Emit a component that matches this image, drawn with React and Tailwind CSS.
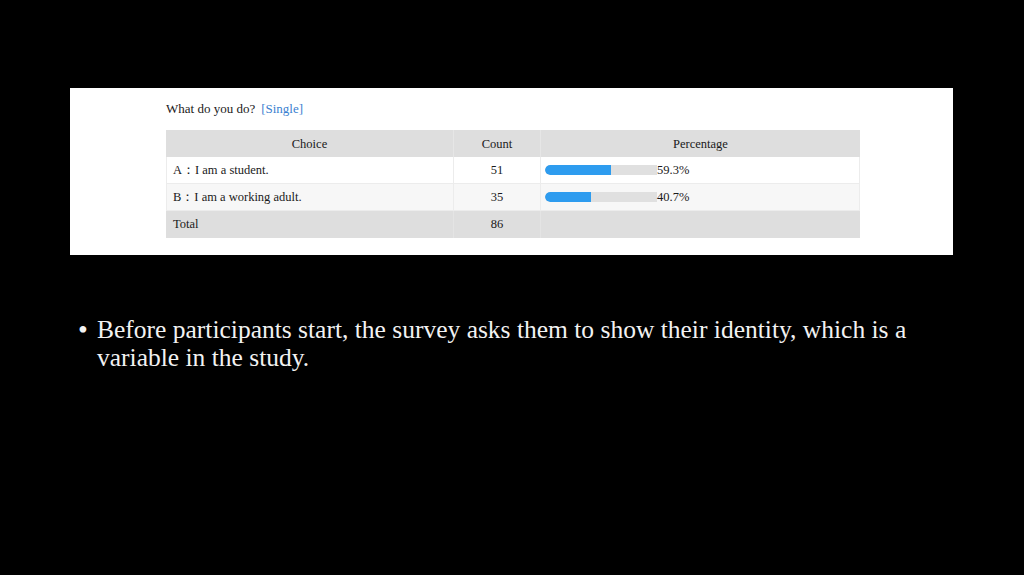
const rows = [
    { label: "A：I am a student.", count: 51, pct: 59.3 },
    { label: "B：I am a working adult.", count: 35, pct: 40.7 },
];

export default function App() {
    return (
        <div className="w-[1024px] h-[575px] bg-black overflow-hidden font-['Liberation_Serif',serif]">
            <div className="h-[88px]" />
            <div className="ml-[70px] w-[883px] h-[167px] bg-white pt-[12px] pl-[96px]">
                <div className="flex items-center h-[18px] text-[13px] text-[#1a1a1a]">
                    <span>What do you do?</span>
                    <span className="ml-[6px] text-[#3a7fd0]">[Single]</span>
                </div>
                <div className="mt-[12px] w-[694px] text-[12.5px] text-[#1a1a1a]">
                    <div className="flex h-[27px] bg-[#dedede]">
                        <div className="w-[287px] flex items-center justify-center pt-[1px]">Choice</div>
                        <div className="w-[87px] flex items-center justify-center pt-[1px] border-l border-[#e6e6e6]">Count</div>
                        <div className="flex-1 flex items-center justify-center pt-[1px] border-l border-[#e6e6e6]">Percentage</div>
                    </div>
                    {rows.map((r, i) => (
                        <div key={r.label}
                            className={`flex h-[27px] border-b border-x border-[#ececec] ${i === 0 ? "bg-white" : "bg-[#f7f7f7]"}`}>
                            <div className="w-[286px] flex items-center pl-[6px]">{r.label}</div>
                            <div className="w-[87px] flex items-center justify-center border-l border-[#ececec]">{r.count}</div>
                            <div className="flex-1 flex items-center pl-[4px] border-l border-[#ececec]">
                                <div className="w-[112px] h-[10px] bg-[#e0e0e0] rounded-l-full overflow-hidden">
                                    <div className="h-full bg-[#2e9cef] rounded-l-full" style={{ width: `${r.pct}%` }} />
                                </div>
                                <span>{r.pct}%</span>
                            </div>
                        </div>
                    ))}
                    <div className="flex h-[27px] bg-[#dedede]">
                        <div className="w-[287px] flex items-center pl-[7px]">Total</div>
                        <div className="w-[87px] flex items-center justify-center border-l border-[#e4e4e4]">86</div>
                        <div className="flex-1 border-l border-[#e4e4e4]" />
                    </div>
                </div>
            </div>
            <div className="mt-[61px] ml-[78px] w-[860px] flex text-[25.5px] leading-[28px] text-[#f2f2f2]">
                <span className="w-[19px] shrink-0 text-[28px]">•</span>
                <p>Before participants start, the survey asks them to show their identity, which is a variable in the study.</p>
            </div>
        </div>
    );
}
